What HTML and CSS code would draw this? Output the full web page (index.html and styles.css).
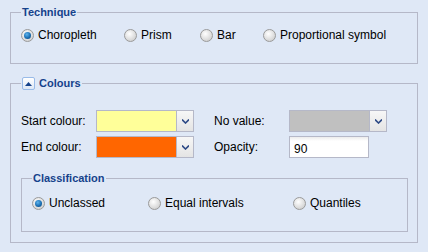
FILE: index.html
```html
<!DOCTYPE html>
<html lang="en">
<head>
    <meta charset="UTF-8">
    <meta name="viewport" content="width=device-width, initial-scale=1.0">
    <link rel="stylesheet" href="styles.css">
</head>
<body>

<fieldset class="box technique">
    <legend>Technique</legend>
    <div class="radios technique-radios">
        <label class="opt"><span class="radio checked"></span>Choropleth</label>
        <label class="opt"><span class="radio"></span>Prism</label>
        <label class="opt"><span class="radio"></span>Bar</label>
        <label class="opt"><span class="radio"></span>Proportional symbol</label>
    </div>
</fieldset>

<fieldset class="box colours">
    <legend>
        <span class="legend-inner">
            <span class="toggle">
                <svg width="7" height="4" viewBox="0 0 7 4"><path d="M0 4 L3.5 0 L7 4 Z" fill="#15428b"/></svg>
            </span>
            Colours
        </span>
    </legend>

    <div class="fields">
        <div class="field">
            <span class="lbl">Start colour:</span>
            <div class="combo">
                <span class="swatch swatch-start"></span>
                <span class="trigger"><svg width="7" height="5" viewBox="0 0 7 5"><path d="M0 0.5 L3.5 4 L7 0.5" fill="none" stroke="#2e4a86" stroke-width="1.6"/></svg></span>
            </div>
        </div>
        <div class="field">
            <span class="lbl">No value:</span>
            <div class="combo">
                <span class="swatch swatch-none"></span>
                <span class="trigger"><svg width="7" height="5" viewBox="0 0 7 5"><path d="M0 0.5 L3.5 4 L7 0.5" fill="none" stroke="#2e4a86" stroke-width="1.6"/></svg></span>
            </div>
        </div>
        <div class="field">
            <span class="lbl">End colour:</span>
            <div class="combo">
                <span class="swatch swatch-end"></span>
                <span class="trigger"><svg width="7" height="5" viewBox="0 0 7 5"><path d="M0 0.5 L3.5 4 L7 0.5" fill="none" stroke="#2e4a86" stroke-width="1.6"/></svg></span>
            </div>
        </div>
        <div class="field">
            <span class="lbl">Opacity:</span>
            <span class="textbox">90</span>
        </div>
    </div>

    <fieldset class="box classification">
        <legend>Classification</legend>
        <div class="radios class-radios">
            <label class="opt"><span class="radio checked"></span>Unclassed</label>
            <label class="opt"><span class="radio"></span>Equal intervals</label>
            <label class="opt"><span class="radio"></span>Quantiles</label>
        </div>
    </fieldset>
</fieldset>

</body>
</html>
```

FILE: styles.css
```css
body {
    margin: 0;
    padding: 5px 10px;
    background-color: #dfe8f6;
    font-family: "Liberation Sans", Arial, sans-serif;
    font-size: 12px;
    color: #000;
}

.box {
    margin: 0;
    border: 1px solid #b5b8c8;
    padding: 7px 9px 20px 10px;
}

legend {
    padding: 0 1px;
    line-height: 15px;
    height: 15px;
    font-size: 11px;
    font-weight: bold;
    color: #15428b;
}

.colours {
    margin-top: 12px;
    padding-top: 19px;
    padding-bottom: 10px;
}

.legend-inner {
    display: flex;
    align-items: center;
    gap: 4px;
    height: 15px;
}

.toggle {
    width: 11px;
    height: 11px;
    border: 1px solid #99bbe8;
    border-radius: 2px;
    background: linear-gradient(#ffffff, #dde7f5);
    display: flex;
    align-items: center;
    justify-content: center;
}

.radios {
    display: grid;
    height: 16px;
    align-items: center;
}

.technique-radios {
    grid-template-columns: 103px 76px 63px auto;
}

.class-radios {
    grid-template-columns: 116px 145px auto;
}

.opt {
    display: flex;
    align-items: center;
    gap: 4px;
    white-space: nowrap;
}

.radio {
    width: 11px;
    height: 11px;
    border: 1px solid #9a9a9a;
    border-radius: 50%;
    background: radial-gradient(circle at 40% 35%, #ffffff, #d6d6d6 70%, #c4c4c4);
    display: flex;
    align-items: center;
    justify-content: center;
}

.radio.checked::after {
    content: "";
    width: 7px;
    height: 7px;
    border-radius: 50%;
    background: radial-gradient(circle at 40% 35%, #5fb4ec, #1a6fb4 55%, #0b3f73);
}

.fields {
    display: grid;
    grid-template-columns: 173px 173px;
    column-gap: 20px;
    row-gap: 4px;
}

.field {
    display: flex;
    align-items: center;
    height: 22px;
}

.lbl {
    width: 75px;
}

.combo {
    display: flex;
    height: 22px;
}

.swatch {
    width: 79px;
    height: 20px;
    border: 1px solid #b5b8c8;
}

.swatch-start {
    background-color: #ffff99;
}

.swatch-end {
    background-color: #ff6600;
}

.swatch-none {
    background-color: #c0c0c0;
}

.trigger {
    width: 16px;
    height: 20px;
    border: 1px solid #b5b8c8;
    border-left: none;
    background: linear-gradient(#f7f7f7, #e4e4e4);
    display: flex;
    align-items: center;
    justify-content: center;
}

.textbox {
    box-sizing: border-box;
    width: 80px;
    height: 22px;
    border: 1px solid #b5b8c8;
    background: linear-gradient(#ececec, #ffffff 4px);
    padding: 4px 4px 0;
    line-height: 16px;
}

.classification {
    margin-top: 13px;
    padding: 9px 10px 20px 10px;
}
```
